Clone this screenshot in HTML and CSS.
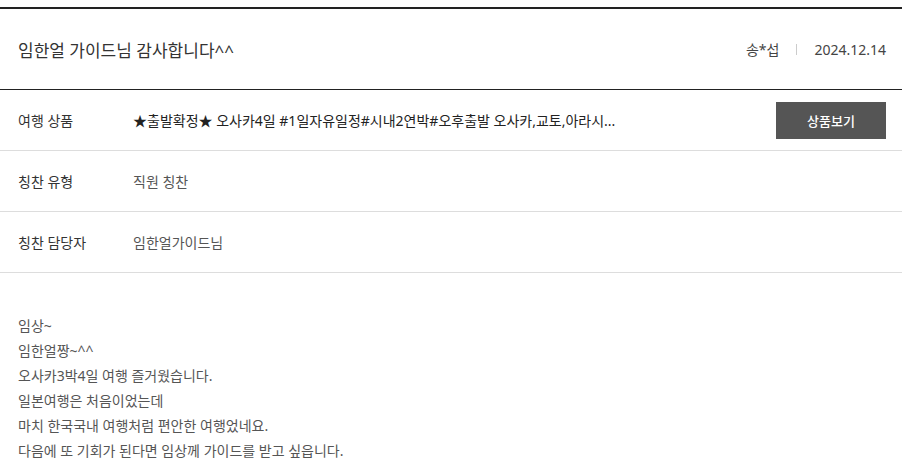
FILE: index.html
```html
<!DOCTYPE html>
<html lang="ko">
<head>
  <meta charset="UTF-8" />
  <title>칭찬합시다</title>
  <link rel="stylesheet" href="styles.css">
</head>
<body>
  <div class="board-view">
    <div class="view-head">
      <h3 class="view-title">임한얼 가이드님 감사합니다^^</h3>
      <div class="view-info">
        <span class="writer">송*섭</span>
        <span class="bar"></span>
        <span class="date">2024.12.14</span>
      </div>
    </div>

    <dl class="view-row">
      <dt>여행 상품</dt>
      <dd class="product">
        <span class="product-name">★출발확정★ 오사카4일 #1일자유일정#시내2연박#오후출발 오사카,교토,아라시...</span>
        <a href="#" class="btn-goods">상품보기</a>
      </dd>
    </dl>
    <dl class="view-row">
      <dt>칭찬 유형</dt>
      <dd>직원 칭찬</dd>
    </dl>
    <dl class="view-row">
      <dt>칭찬 담당자</dt>
      <dd>임한얼가이드님</dd>
    </dl>

    <div class="view-content">
      <p>임상~</p>
      <p>임한얼짱~^^</p>
      <p>오사카3박4일 여행 즐거웠습니다.</p>
      <p>일본여행은 처음이었는데</p>
      <p>마치 한국국내 여행처럼 편안한 여행었네요.</p>
      <p>다음에 또 기회가 된다면 임상께 가이드를 받고 싶읍니다.</p>
    </div>
  </div>
</body>
</html>
```

FILE: styles.css
```css
body {
  margin: 0;
  padding-top: 7px;
  font-family: "Noto Sans", "Noto Sans CJK KR", sans-serif;
  color: #333;
  background: #fff;
}

.board-view {
  border-top: 2px solid #222;
}

.view-head {
  display: flex;
  align-items: center;
  justify-content: space-between;
  height: 80px;
  padding: 0 16px 0 18px;
  border-bottom: 1px solid #222;
}
.view-title {
  margin: 0;
  font-size: 17px;
  font-weight: 400;
  color: #333;
}
.view-info {
  display: flex;
  align-items: center;
  font-size: 14px;
  color: #444;
}
.view-info .bar {
  width: 1px;
  height: 11px;
  background: #ccc;
  margin: 0 17px;
}

.view-row {
  display: flex;
  align-items: center;
  height: 60px;
  margin: 0;
  padding: 0 16px 0 18px;
  border-bottom: 1px solid #ddd;
  font-size: 14px;
}
.view-row dt {
  width: 115px;
  flex-shrink: 0;
  color: #333;
}
.view-row dd {
  margin: 0;
  flex: 1;
  color: #555;
}
.view-row dd.product {
  display: flex;
  align-items: center;
  justify-content: space-between;
  color: #222;
}
.btn-goods {
  display: flex;
  align-items: center;
  justify-content: center;
  width: 110px;
  height: 37px;
  background: #555;
  color: #fff;
  font-size: 13px;
  font-weight: 500;
  text-decoration: none;
}

.view-content {
  padding: 40px 18px 10px;
  font-size: 14px;
  line-height: 25px;
  color: #555;
}
.view-content p {
  margin: 0;
}
```
